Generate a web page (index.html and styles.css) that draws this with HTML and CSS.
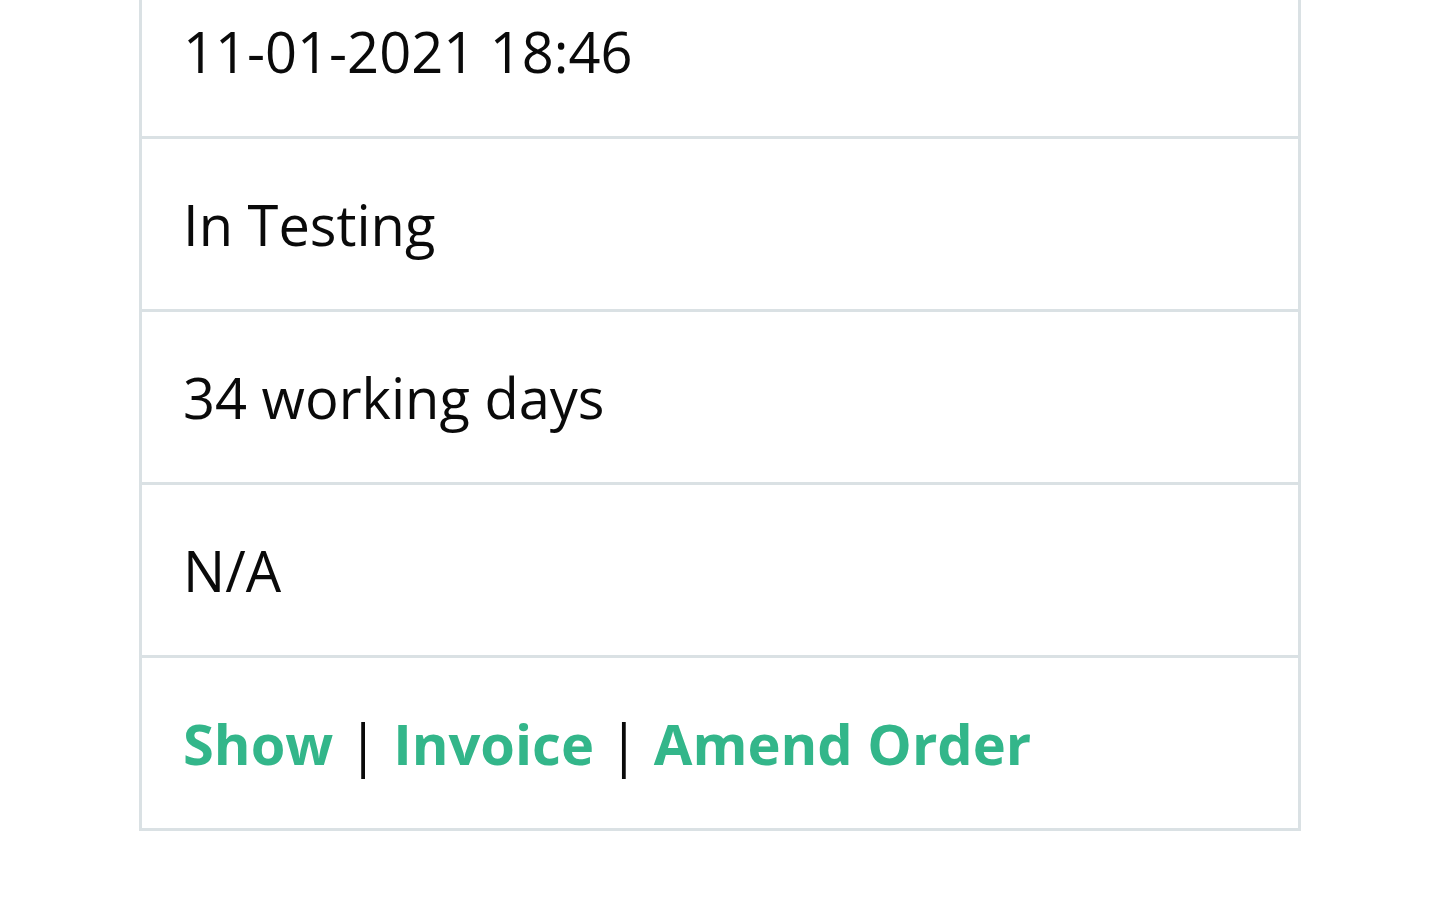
FILE: index.html
```html
<!DOCTYPE html>
<html lang="en">
<head>
  <meta charset="UTF-8" />
  <meta name="viewport" content="width=device-width, initial-scale=1.0"/>
  <title>Order Details</title>
  <link rel="stylesheet" href="styles.css">
</head>
<body>
  <div class="container">
    <table class="order-table">
      <tbody>
        <tr><td>11-01-2021 18:46</td></tr>
        <tr><td>In Testing</td></tr>
        <tr><td>34 working days</td></tr>
        <tr><td>N/A</td></tr>
        <tr>
          <td class="actions">
            <a href="#">Show</a> <span class="sep">|</span>
            <a href="#">Invoice</a> <span class="sep">|</span>
            <a href="#">Amend Order</a>
          </td>
        </tr>
      </tbody>
    </table>
  </div>
</body>
</html>
```

FILE: styles.css
```css
body {
  font-family: 'Open Sans', sans-serif;
  background-color: #fff;
  color: #0a0a0a;
  margin: 0;
  padding: 0;
}

.container {
  padding: 0 134px 0 139px;
  margin-top: -37px;
}

.order-table {
  width: 100%;
  border-collapse: collapse;
}

.order-table td {
  border: 3px solid #dae1e4;
  height: 173px;
  padding: 0 41px;
  font-size: 56px;
  vertical-align: middle;
  box-sizing: border-box;
}

.actions a {
  color: #33b68a;
  font-weight: 700;
  text-decoration: none;
}

.actions .sep {
  color: #0a0a0a;
}
```
